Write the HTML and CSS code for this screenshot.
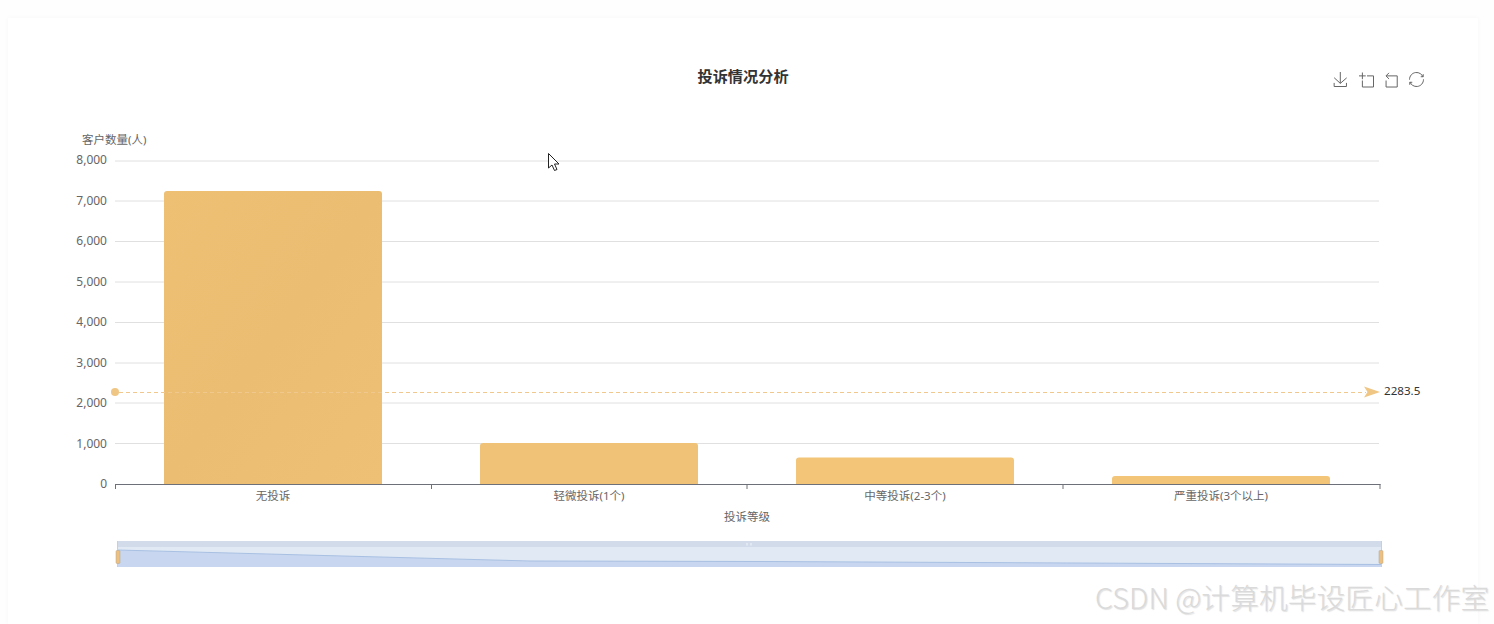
FILE: index.html
```html
<!DOCTYPE html>
<html lang="zh">
<head>
<meta charset="utf-8">
<title>投诉情况分析</title>
<link rel="stylesheet" href="styles.css">
</head>
<body>
<main class="page">
  <section class="card">
    <svg class="chart" width="1470" height="606" viewBox="8 18 1470 606" xmlns="http://www.w3.org/2000/svg">
      <defs>
        <linearGradient id="barShade" x1="0" y1="0" x2="1" y2="1">
          <stop offset="0" stop-color="#edc074"/>
          <stop offset="0.5" stop-color="#ebbd72"/>
          <stop offset="1" stop-color="#edc075"/>
        </linearGradient>
      </defs>

      <text class="title" x="743" y="82">投诉情况分析</text>

      <g class="toolbox">
        <path transform="translate(1333 72) scale(.25)" d="M4.700 22.900L29.300 45.500L54.700 23.400M4.600 43.600L4.600 58L53.800 58L53.800 43.600M29.200 45.100L29.200 0"/>
        <path transform="translate(1359 72.500) scale(.25)" d="M0 13.500h26.900M13.500 26.900V0M32.100 13.500H58V58H13.500V32.100"/>
        <path transform="translate(1383.500 72.500) scale(.25)" d="M22 1.400L9.900 13.500l12.300 12.300M10.300 13.500H54.900v44.600H10.300v-26"/>
        <path transform="translate(1409 72) scale(.25)" d="M47 18.900h9.800V8.700M56.300 20.100C52.100 9 40.500 .6 26.800 2.100C12.600 3.700 1.600 16.200 2.100 30.600M13 41.100H3.100v10.200M3.700 39.900c4.200 11.100 15.800 19.500 29.500 18c14.200-1.600 25.200-14.100 24.700-28.500"/>
      </g>

      <text class="axis-name" x="82" y="144">客户数量(人)</text>

      <g class="grid">
        <line x1="115" x2="1379" y1="161" y2="161"/>
        <line x1="115" x2="1379" y1="201" y2="201"/>
        <line x1="115" x2="1379" y1="241.500" y2="241.500"/>
        <line x1="115" x2="1379" y1="282" y2="282"/>
        <line x1="115" x2="1379" y1="322.500" y2="322.500"/>
        <line x1="115" x2="1379" y1="363" y2="363"/>
        <line x1="115" x2="1379" y1="403" y2="403"/>
        <line x1="115" x2="1379" y1="443.500" y2="443.500"/>
      </g>

      <g class="y-labels">
        <text x="107" y="164">8,000</text>
        <text x="107" y="205">7,000</text>
        <text x="107" y="245">6,000</text>
        <text x="107" y="286">5,000</text>
        <text x="107" y="326">4,000</text>
        <text x="107" y="367">3,000</text>
        <text x="107" y="407">2,000</text>
        <text x="107" y="448">1,000</text>
        <text x="107" y="488">0</text>
      </g>

      <g class="bars">
        <path class="bar-a" d="M164 484V194a3 3 0 0 1 3-3h212a3 3 0 0 1 3 3v290z"/>
        <path class="bar-b" d="M480 484V446a3 3 0 0 1 3-3h212a3 3 0 0 1 3 3v38z"/>
        <path class="bar-c" d="M796 484V460.500a3 3 0 0 1 3-3h212a3 3 0 0 1 3 3v23.500z"/>
        <path class="bar-d" d="M1112 484V479a3 3 0 0 1 3-3h212a3 3 0 0 1 3 3v5z"/>
      </g>

      <g class="axis">
        <path d="M115 484.500h1265.500M115.500 484v5M431.500 484v5M747 484v5M1063 484v5M1380 484v5"/>
      </g>

      <g class="x-labels">
        <text x="273" y="500">无投诉</text>
        <text x="589" y="500">轻微投诉(1个)</text>
        <text x="905" y="500">中等投诉(2-3个)</text>
        <text x="1221" y="500">严重投诉(3个以上)</text>
        <text x="747" y="521">投诉等级</text>
      </g>

      <line class="mark-line" x1="119" x2="1366" y1="392.500" y2="392.500"/>
      <circle class="mark-dot" cx="115" cy="392" r="4"/>
      <path class="mark-dot" d="M1364 386.500l16 5.500-16 5.500 3.500-5.500z"/>
      <text class="mark-label" x="1384" y="395">2283.5</text>

      <g class="zoom">
        <rect class="zoom-top" x="117" y="541" width="1265" height="6"/>
        <rect class="zoom-body" x="117" y="547" width="1265" height="20"/>
        <path class="zoom-area" d="M117 550L530 561L760 561.500L1382 564.500V567H117z"/>
        <path class="zoom-line" d="M117 550L530 561L760 561.500L1382 564.500"/>
        <path class="zoom-edge" d="M117.500 541v26M1381.500 541v26"/>
        <rect class="zoom-handle" x="116" y="550.500" width="4" height="13" rx="1"/>
        <rect class="zoom-handle" x="1379" y="550.500" width="4" height="13" rx="1"/>
        <path class="zoom-grip" d="M747 543v2.500M751 543v2.500"/>
      </g>

      <path class="cursor" d="M548.500 153.500v14.500l3.500-3 2.500 5.500 2.500-1-2.500-5.500h4.500z"/>
    </svg>
  </section>
  <div class="watermark">CSDN @计算机毕设匠心工作室</div>
</main>
</body>
</html>
```

FILE: styles.css
```css
html, body {
  margin: 0;
  height: 100%;
  overflow: hidden;
  background: #fefefe;
}

.page {
  position: relative;
  height: 624px;
  padding: 18px 16px 0 8px;
  box-sizing: border-box;
  font-family: "Noto Sans", "Noto Sans CJK SC", sans-serif;
}

.card {
  height: 606px;
  background: #ffffff;
  box-shadow: 0 0 5px rgba(0, 0, 0, 0.035);
}

.chart {
  display: block;
}

.chart text {
  font-family: "Noto Sans", "Noto Sans CJK SC", sans-serif;
  font-size: 12px;
  fill: #666666;
}

.chart .title {
  font-size: 15.200px;
  font-weight: 700;
  fill: #333333;
  text-anchor: middle;
}

.toolbox path {
  fill: none;
  stroke: #666666;
  stroke-width: 1;
  vector-effect: non-scaling-stroke;
}

.chart .axis-name {
  font-size: 11.500px;
}

.grid line {
  stroke: #e0e0e0;
  stroke-width: 1;
}

.y-labels text {
  text-anchor: end;
}

.chart .x-labels text {
  font-size: 11.500px;
  text-anchor: middle;
}

.bar-a { fill: url(#barShade); }
.bar-b { fill: #efc277; }
.bar-c { fill: #f2c578; }
.bar-d { fill: #f2c578; }

.axis path {
  fill: none;
  stroke: #6e7079;
  stroke-width: 1;
}

.mark-line {
  stroke: #f0c78c;
  stroke-width: 1;
  stroke-dasharray: 4 3;
}

.mark-dot {
  fill: #f0c684;
}

.chart .mark-label {
  font-size: 11.600px;
  fill: #333333;
}

.zoom-top { fill: #d2dbe9; }
.zoom-body { fill: #e0e9f4; }
.zoom-area { fill: #c8d7ef; }

.zoom-line {
  fill: none;
  stroke: #a9c0e3;
  stroke-width: 1;
}

.zoom-edge {
  fill: none;
  stroke: #c9ced8;
  stroke-width: 1;
}

.zoom-handle {
  fill: #edc07f;
  stroke: #b4a58c;
  stroke-width: 0.500;
}

.zoom-grip {
  fill: none;
  stroke: #f2f5fa;
  stroke-width: 1;
}

.cursor {
  fill: #ffffff;
  stroke: #222222;
  stroke-width: 1;
}

.watermark {
  position: absolute;
  left: 1095px;
  top: 577px;
  font-family: "Noto Sans CJK SC", sans-serif;
  font-size: 28.800px;
  font-weight: 300;
  line-height: 40px;
  white-space: nowrap;
  color: #dadada;
  text-shadow: 1px 1px 1px rgba(120, 120, 120, 0.22);
}
```
